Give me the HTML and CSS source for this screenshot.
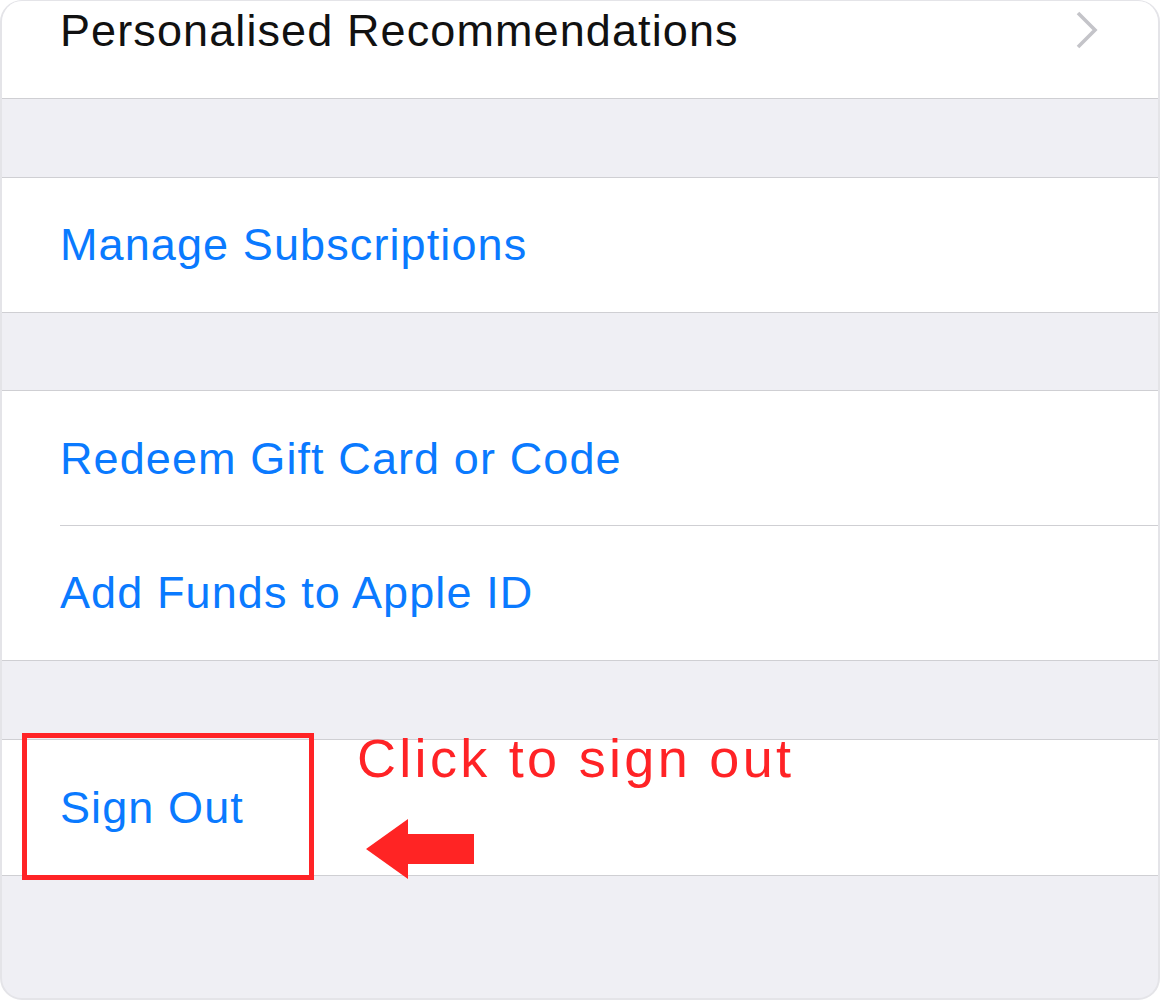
FILE: index.html
```html
<!DOCTYPE html>
<html>
<head>
<meta charset="utf-8">
<link rel="stylesheet" href="styles.css">
</head>
<body>
<div class="frame">
  <div class="group first">
    <div class="row">
      <span class="label dark">Personalised Recommendations</span>
      <svg class="chev" width="26" height="40" viewBox="0 0 26 40"><polyline points="4,3 21,20 4,37" fill="none" stroke="#c4c4c9" stroke-width="3.6"/></svg>
    </div>
  </div>
  <div class="spacer"></div>
  <div class="group">
    <div class="row"><span class="label blue">Manage Subscriptions</span></div>
  </div>
  <div class="spacer short"></div>
  <div class="group">
    <div class="row inset"><span class="label blue">Redeem Gift Card or Code</span></div>
    <div class="row"><span class="label blue">Add Funds to Apple ID</span></div>
  </div>
  <div class="spacer"></div>
  <div class="group">
    <div class="row last"><span class="label blue">Sign Out</span></div>
  </div>
  <div class="highlight"></div>
  <div class="note">Click to sign out</div>
  <svg class="arrow" width="110" height="62" viewBox="0 0 110 62"><polygon points="0,30 42,0 42,15 108,15 108,45 42,45 42,60" fill="#ff2424"/></svg>
</div>
</body>
</html>
```
FILE: styles.css
```css
html, body { margin: 0; padding: 0; background: #fff; }
.frame {
  position: relative;
  width: 1160px;
  height: 1000px;
  box-sizing: border-box;
  border: 2px solid #e4e4e8;
  border-top-width: 1px;
  border-radius: 22px;
  background: #efeff4;
  overflow: hidden;
  font-family: "Liberation Sans", Arial, sans-serif;
}
.group {
  background: #fff;
  border-top: 1px solid #cfcfd3;
  border-bottom: 1px solid #cfcfd3;
}
.group.first { border-top: none; margin-top: -37px; }
.spacer { height: 78px; }
.spacer.short { height: 77px; }
.row {
  height: 134px;
  display: flex;
  align-items: center;
  padding-left: 58px;
  padding-right: 56px;
  box-sizing: border-box;
  position: relative;
}
.row.last { height: 135px; }
.row.inset { height: 135px; }
.row.inset::after {
  content: "";
  position: absolute;
  left: 58px; right: 0; bottom: 0;
  height: 1px;
  background: #cfcfd3;
}
.label { font-size: 45px; letter-spacing: 1.1px; }
.dark { color: #111; }
.blue { color: #0a7aff; }
.chev { margin-left: auto; margin-right: 2px; margin-top: -2px; }
.highlight {
  position: absolute;
  left: 20px; top: 732px;
  width: 292px; height: 147px;
  box-sizing: border-box;
  border: 5px solid #ff2326;
}
.note {
  position: absolute;
  left: 355px; top: 726px;
  font-size: 54px;
  color: #ff2326;
  letter-spacing: 3.3px;
}
.arrow { position: absolute; left: 364px; top: 818px; }
```
